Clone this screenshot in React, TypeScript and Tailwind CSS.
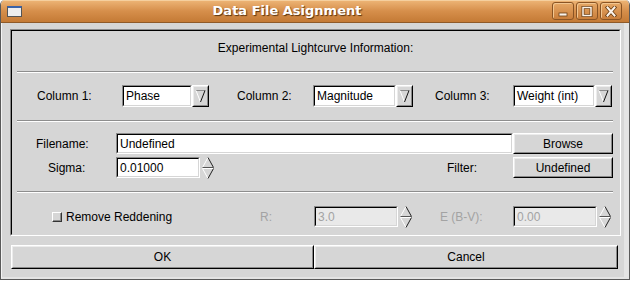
import React from "react";

const Raised = ({ className = "", children }: { className?: string; children?: React.ReactNode }) => (
  <div className={`border border-t-white border-l-white border-r-black border-b-black ${className}`}>
    <div className="w-full h-full border border-t-[#ececec] border-l-[#ececec] border-r-[#8a8a8a] border-b-[#8a8a8a] flex items-center justify-center">
      {children}
    </div>
  </div>
);

const Sunken = ({
  className = "",
  value,
  disabled = false,
}: {
  className?: string;
  value: string;
  disabled?: boolean;
}) => (
  <div className={`h-full border border-t-[#8a8a8a] border-l-[#8a8a8a] border-r-white border-b-white ${className}`}>
    <div
      className={`h-full border border-t-black border-l-black border-r-[#d6d6d6] border-b-[#d6d6d6] flex items-center pl-[2px] ${
        disabled ? "bg-[#e9e9e9] text-[#a3a3a3]" : "bg-white text-black"
      }`}
    >
      {value}
    </div>
  </div>
);

const ComboArrow = () => (
  <Raised className="w-[17px] h-full">
    <svg width="11" height="14" viewBox="0 0 11 14">
      <line x1="1" y1="1.5" x2="10" y2="1.5" stroke="#8a8a8a" strokeWidth="1" />
      <line x1="1" y1="1.5" x2="5.5" y2="13" stroke="#ffffff" strokeWidth="1" />
      <line x1="10" y1="1.5" x2="5.5" y2="13" stroke="#111111" strokeWidth="1" />
    </svg>
  </Raised>
);

const Spinner = () => (
  <svg width="12" height="22" viewBox="0 0 12 22" className="ml-[2px] shrink-0">
    <line x1="0.5" y1="10.5" x2="6" y2="0.5" stroke="#ffffff" strokeWidth="1" />
    <line x1="6" y1="0.5" x2="11.5" y2="10.5" stroke="#222222" strokeWidth="1" />
    <line x1="0.5" y1="10.5" x2="11.5" y2="10.5" stroke="#555555" strokeWidth="1" />
    <line x1="0.5" y1="11.5" x2="11.5" y2="11.5" stroke="#ffffff" strokeWidth="1" />
    <line x1="0.5" y1="11.5" x2="6" y2="21.5" stroke="#ffffff" strokeWidth="1" />
    <line x1="11.5" y1="11.5" x2="6" y2="21.5" stroke="#222222" strokeWidth="1" />
  </svg>
);

const Combo = ({ boxW, value }: { boxW: string; value: string }) => (
  <div className="flex h-full">
    <Sunken className={boxW} value={value} />
    <ComboArrow />
  </div>
);

const Separator = () => (
  <div className="ml-[5px] mr-[6px] h-[2px] border-t border-t-[#8e8e8e] border-b border-b-white" />
);

const TitleButton = ({ children }: { children: React.ReactNode }) => (
  <div className="w-[22px] h-[18px] rounded-[3px] border border-[#8a5424] bg-gradient-to-b from-[#e6a866] to-[#c97e3a] shadow-[inset_1px_1px_0_#f2c690] flex items-center justify-center">
    {children}
  </div>
);

export default function App() {
  return (
    <div className="w-[630px] h-[281px] bg-white font-['Liberation_Sans',Arial,sans-serif] text-[12px] text-black">
      <div className="w-[630px] h-[280px] flex flex-col rounded-t-[5px] overflow-hidden border-r border-b border-l border-[#5a5a5a]">
        {/* title bar */}
        <div className="h-[23px] shrink-0 flex items-center bg-gradient-to-b from-[#eeb677] via-[#d68f4b] to-[#c47a35] border-b border-b-[#8f5a28] shadow-[inset_0_1px_0_#f5cf9e]">
          <div className="ml-[6px] w-[15px] h-[11px] border border-[#555] bg-[#eeeeee] border-t-2 border-t-[#3a63a8]" />
          <div className="flex-1 text-center font-['DejaVu_Sans',sans-serif] font-bold text-[13px] text-white [text-shadow:1px_1px_1px_#5a3410]">
            Data File Asignment
          </div>
          <div className="mr-[7px] flex gap-[2px]">
            <TitleButton>
              <svg width="12" height="11" viewBox="0 0 12 11">
                <rect x="2" y="7" width="8" height="3" fill="#fbf3ea" stroke="#6b3f15" strokeWidth="0.8" />
              </svg>
            </TitleButton>
            <TitleButton>
              <svg width="12" height="11" viewBox="0 0 12 11">
                <rect x="2" y="1.5" width="8" height="8" fill="none" stroke="#6b3f15" strokeWidth="3" />
                <rect x="2" y="1.5" width="8" height="8" fill="none" stroke="#fbf3ea" strokeWidth="1.5" />
              </svg>
            </TitleButton>
            <TitleButton>
              <svg width="12" height="11" viewBox="0 0 12 11">
                <path d="M2.5 1.5 L9.5 9.5 M9.5 1.5 L2.5 9.5" stroke="#6b3f15" strokeWidth="3.6" strokeLinecap="square" />
                <path d="M2.5 1.5 L9.5 9.5 M9.5 1.5 L2.5 9.5" stroke="#fbf3ea" strokeWidth="2" strokeLinecap="square" />
              </svg>
            </TitleButton>
          </div>
        </div>

        {/* body */}
        <div className="flex-1 flex flex-col bg-[#d6d6d6] border-l border-l-[#f4f4f4] border-r-[5px] border-r-[#e4e4e4] border-b-2 border-b-[#e4e4e4]">
          {/* panel */}
          <div className="ml-[8px] mt-[6px] w-[611px] h-[207px] border border-t-[#8a8a8a] border-l-[#8a8a8a] border-r-white border-b-white">
            <div className="w-full h-full flex flex-col border border-t-black border-l-black border-r-[#d6d6d6] border-b-[#d6d6d6]">
              <div className="h-[40px] pt-[10px] leading-[14px] text-center">Experimental Lightcurve Information:</div>
              <Separator />

              {/* column row */}
              <div className="h-[22px] mt-[12px] mb-[13px] flex items-center">
                <div className="ml-[25px] w-[85px]">Column 1:</div>
                <Combo boxW="w-[70px]" value="Phase" />
                <div className="ml-[28px] w-[76px]">Column 2:</div>
                <Combo boxW="w-[83px]" value="Magnitude" />
                <div className="ml-[22px] w-[78px]">Column 3:</div>
                <Combo boxW="w-[82px]" value="Weight (int)" />
              </div>
              <Separator />

              {/* filename block */}
              <div className="h-[69px] pt-[11px] flex flex-col">
                <div className="h-[21px] flex items-center">
                  <div className="ml-[24px] w-[80px]">Filename:</div>
                  <Sunken className="w-[397px]" value="Undefined" />
                  <Raised className="w-[100px] h-full">Browse</Raised>
                </div>
                <div className="h-[21px] mt-[3px] flex items-center">
                  <div className="ml-[36px] w-[68px]">Sigma:</div>
                  <Sunken className="w-[84px]" value="0.01000" />
                  <Spinner />
                  <div className="ml-[233px] w-[66px]">Filter:</div>
                  <Raised className="w-[100px] h-full">Undefined</Raised>
                </div>
              </div>
              <Separator />

              {/* reddening row */}
              <div className="h-[21px] mt-[13px] flex items-center">
                <div className="ml-[40px] w-[208px] flex items-center">
                  <div className="w-[10px] h-[10px] border border-t-white border-l-white border-r-[#333] border-b-[#333] bg-[#d6d6d6] shadow-[inset_-1px_-1px_0_#8a8a8a]" />
                  <span className="ml-[4px]">Remove Reddening</span>
                </div>
                <div className="w-[54px] text-[#a3a3a3]">R:</div>
                <Sunken className="w-[84px]" value="3.0" disabled />
                <Spinner />
                <div className="ml-[28px] w-[73px] text-[#a3a3a3]">E (B-V):</div>
                <Sunken className="w-[84px]" value="0.00" disabled />
                <Spinner />
              </div>
            </div>
          </div>

          {/* buttons */}
          <div className="ml-[9px] mt-[9px] h-[24px] flex">
            <Raised className="w-[303px] h-full">OK</Raised>
            <Raised className="w-[304px] h-full">Cancel</Raised>
          </div>
        </div>
      </div>
    </div>
  );
}
